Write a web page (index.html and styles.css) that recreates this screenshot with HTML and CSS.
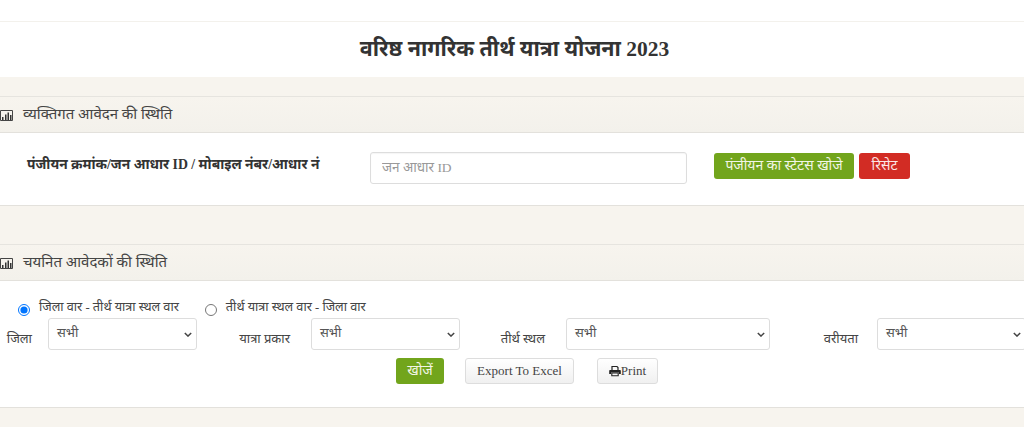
FILE: index.html
```html
<!DOCTYPE html>
<html lang="hi">
<head>
    <meta charset="UTF-8">
    <meta name="viewport" content="width=device-width, initial-scale=1.0">
    <title>वरिष्ठ नागरिक तीर्थ यात्रा योजना 2023</title>
    <link rel="stylesheet" href="styles.css">
</head>
<body>
    <div class="top-strip"></div>
    <h1 class="page-title">वरिष्ठ नागरिक तीर्थ यात्रा योजना 2023</h1>

    <section class="panel panel-first">
        <h2 class="panel-heading">
            <svg class="chart-icon" viewBox="3 0 13 13"><path d="M3.500 1.500h12v10h-12z" fill="none" stroke="#444"/><path d="M5 8h1.500v3H5zM8 5.500h1.500V11H8zM10.500 3.500h1.500V11h-1.500zM13 6h1.500v5H13z" fill="#333"/></svg>
            व्यक्तिगत आवेदन की स्थिति
        </h2>
        <div class="status-row">
            <label class="status-label">पंजीयन क्रमांक/जन आधार ID / मोबाइल नंबर/आधार नं</label>
            <input class="text-box" type="text" placeholder="जन आधार ID">
            <button class="btn btn-green btn-status">पंजीयन का स्टेटस खोजे</button>
            <button class="btn btn-red">रिसेट</button>
        </div>
    </section>

    <section class="panel panel-second">
        <h2 class="panel-heading">
            <svg class="chart-icon" viewBox="3 0 13 13"><path d="M3.500 1.500h12v10h-12z" fill="none" stroke="#444"/><path d="M5 8h1.500v3H5zM8 5.500h1.500V11H8zM10.500 3.500h1.500V11h-1.500zM13 6h1.500v5H13z" fill="#333"/></svg>
            चयनित आवेदकों की स्थिति
        </h2>
        <div class="panel-body">
            <div class="radio-row">
                <label class="radio-item"><input type="radio" name="vaar" checked> जिला वार - तीर्थ यात्रा स्थल वार</label>
                <label class="radio-item"><input type="radio" name="vaar"> तीर्थ यात्रा स्थल वार - जिला वार</label>
            </div>
            <div class="filter-row">
                <label class="filter-label">जिला</label>
                <div class="select-box">सभी<svg class="caret" viewBox="0 0 10 6"><path d="M1 1l4 4 4-4" fill="none" stroke="#444" stroke-width="1.800"/></svg></div>
                <label class="filter-label">यात्रा प्रकार</label>
                <div class="select-box">सभी<svg class="caret" viewBox="0 0 10 6"><path d="M1 1l4 4 4-4" fill="none" stroke="#444" stroke-width="1.800"/></svg></div>
                <label class="filter-label">तीर्थ स्थल</label>
                <div class="select-box">सभी<svg class="caret" viewBox="0 0 10 6"><path d="M1 1l4 4 4-4" fill="none" stroke="#444" stroke-width="1.800"/></svg></div>
                <label class="filter-label filter-label-last">वरीयता</label>
                <div class="select-box">सभी<svg class="caret" viewBox="0 0 10 6"><path d="M1 1l4 4 4-4" fill="none" stroke="#444" stroke-width="1.800"/></svg></div>
            </div>
            <div class="action-row">
                <button class="btn btn-green btn-search">खोजें</button>
                <button class="btn btn-light btn-export">Export To Excel</button>
                <button class="btn btn-light btn-print">
                    <svg class="print-icon" viewBox="0 0 12 12"><path d="M3 5V1.500h5l1 1V5" fill="none" stroke="#222" stroke-width="1.200"/><path d="M1 5h10a.8.8 0 0 1 .8.8V9H10V7.500H2V9H.2V5.800A.8.8 0 0 1 1 5z" fill="#222"/><path d="M2.800 8h6.400v2.800H2.800z" fill="none" stroke="#222" stroke-width="1.100"/></svg>Print
                </button>
            </div>
        </div>
    </section>
    <div class="bottom-strip"></div>
</body>
</html>
```

FILE: styles.css
```css
html, body {
    margin: 0;
    height: 427px;
    overflow: hidden;
}
body {
    width: 1024px;
    background-color: #f7f4ee;
    font-family: "Liberation Serif", "Noto Sans Devanagari", "Noto Serif Devanagari", serif;
    color: #444;
}
.top-strip {
    height: 21px;
    background-color: #fff;
    border-bottom: 1px solid #f3f1ec;
}
.page-title {
    margin: 0;
    height: 55px;
    line-height: 54px;
    background-color: #fff;
    text-align: center;
    font-size: 21.500px;
    font-weight: bold;
    color: #333;
    padding-left: 5px;
}
.panel {
    background-color: #fff;
    border-bottom: 1px solid #e3e1dc;
}
.panel-first {
    margin-top: 19px;
}
.panel-second {
    margin-top: 38px;
}
.panel-heading {
    display: flex;
    align-items: center;
    gap: 10px;
    margin: 0;
    height: 37px;
    box-sizing: border-box;
    padding-top: 2px;
    border-top: 1px solid #e6e4df;
    border-bottom: 1px solid #e3e1dc;
    background: linear-gradient(#f7f4ee, #f3f1eb);
    font-size: 15px;
    font-weight: normal;
    color: #444;
}
.chart-icon {
    width: 13px;
    height: 13px;
    flex: none;
}
.status-row {
    display: flex;
    align-items: flex-start;
    height: 72px;
    box-sizing: border-box;
    padding: 19px 0 0 27px;
}
.status-label {
    width: 343px;
    margin-top: 5px;
    font-size: 13.800px;
    font-weight: bold;
    color: #333;
}
.text-box {
    width: 317px;
    height: 32px;
    box-sizing: border-box;
    padding: 0 11px;
    border: 1px solid #ddd;
    border-radius: 3px;
    font-family: inherit;
    font-size: 13.500px;
    box-shadow: inset 0 1px 1px rgba(0,0,0,0.04);
}
.text-box::placeholder {
    color: #999;
}
.btn {
    height: 26px;
    box-sizing: border-box;
    padding: 0;
    border: 1px solid transparent;
    border-radius: 3px;
    font-family: inherit;
    font-size: 14px;
    cursor: pointer;
}
.btn-green {
    background-color: #72a51c;
    color: #f2f6e6;
}
.btn-red {
    width: 51px;
    margin: 1px 0 0 5px;
    background-color: #d22c24;
    color: #fbe6e4;
}
.btn-light {
    background: linear-gradient(#fff, #f0f0f0);
    border-color: #ddd;
    color: #444;
    font-size: 13px;
}
.btn-status {
    width: 140px;
    margin: 1px 0 0 27px;
}
.panel-body {
    height: 126px;
    box-sizing: border-box;
    padding-top: 17px;
}
.radio-row {
    display: flex;
    gap: 26px;
    height: 20px;
    padding-left: 18px;
    font-size: 12.700px;
}
.radio-item {
    display: flex;
    align-items: center;
    gap: 9px;
}
.radio-item input {
    margin: 3px 0 0;
    width: 12px;
    height: 12px;
}
.filter-row {
    display: grid;
    grid-template-columns: 48px 149px 114px 149px 106px 204px 107px 149px;
    height: 32px;
    align-items: center;
}
.filter-label {
    justify-self: end;
    padding-right: 16px;
    padding-top: 10px;
    font-size: 13px;
}
.filter-label:nth-of-type(n+2) {
    padding-right: 21px;
}
.filter-row .filter-label-last {
    padding-right: 19px;
}
.select-box {
    display: flex;
    justify-content: space-between;
    align-items: center;
    height: 32px;
    box-sizing: border-box;
    padding: 0 4px 2px 8px;
    border: 1px solid #ddd;
    border-radius: 3px;
    font-size: 13px;
    background-color: #fff;
    color: #555;
}
.caret {
    width: 8px;
    height: 5px;
    margin-top: 2px;
}
.action-row {
    display: flex;
    margin-top: 8px;
    padding-left: 396px;
}
.btn-search {
    width: 48px;
}
.btn-export {
    width: 109px;
    margin-left: 21px;
}
.btn-print {
    display: flex;
    align-items: center;
    justify-content: center;
    width: 61px;
    margin-left: 23px;
}
.print-icon {
    width: 12px;
    height: 12px;
}
.bottom-strip {
    height: 19px;
}
```
